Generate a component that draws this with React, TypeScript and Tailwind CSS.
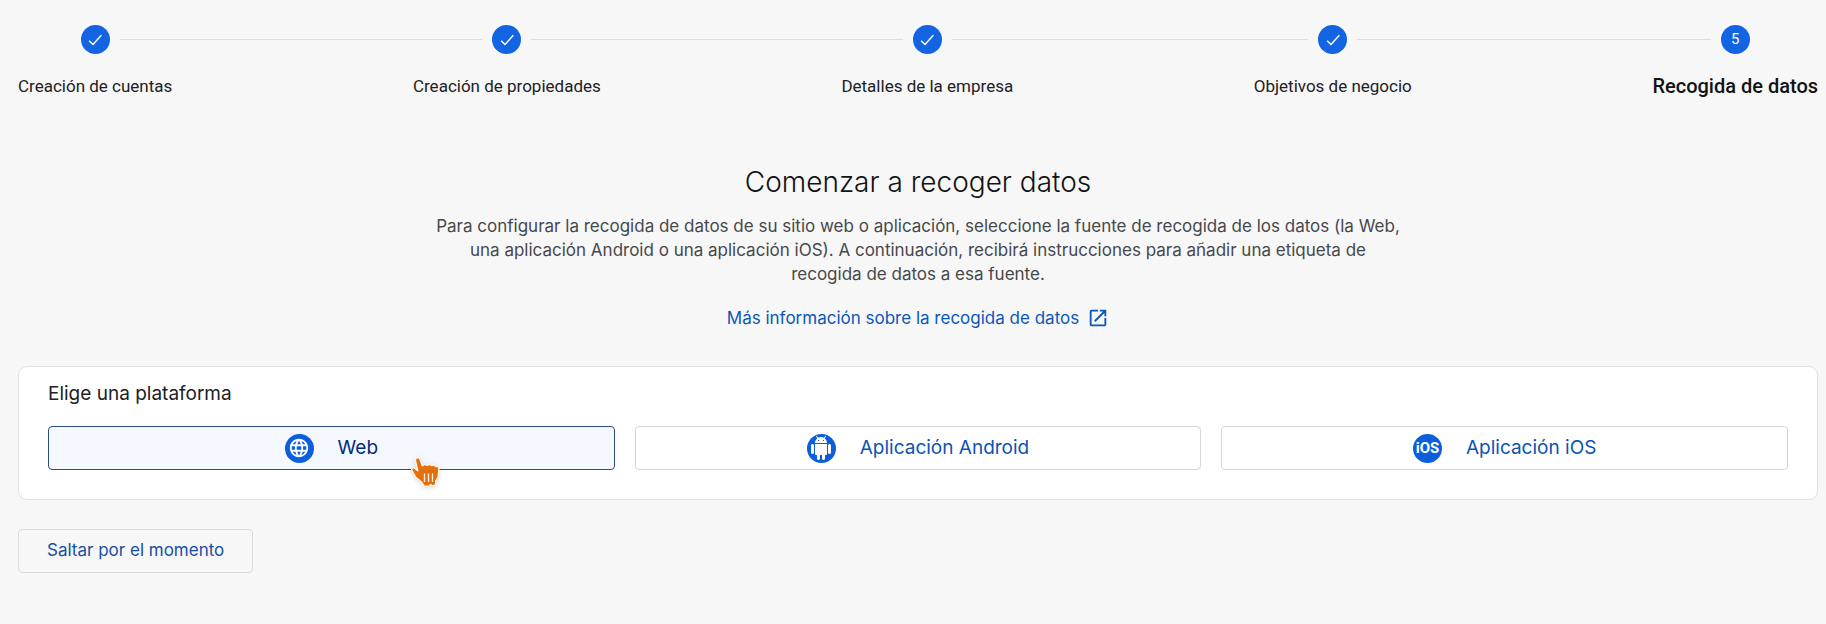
import { Fragment, useState } from 'react';
import { MdLanguage, MdOpenInNew } from 'react-icons/md';
import clsx from 'clsx';

const STEPS = [
  { label: 'Creación de cuentas', done: true },
  { label: 'Creación de propiedades', done: true },
  { label: 'Detalles de la empresa', done: true },
  { label: 'Objetivos de negocio', done: true },
  { label: 'Recogida de datos', done: false },
];

type PlatformId = 'web' | 'android' | 'ios';

const PLATFORMS: { id: PlatformId; label: string }[] = [
  { id: 'web', label: 'Web' },
  { id: 'android', label: 'Aplicación Android' },
  { id: 'ios', label: 'Aplicación iOS' },
];

function Line({ hidden }: { hidden?: boolean }) {
  return <span className={clsx('h-px flex-1', !hidden && 'bg-[#dcdde0]')} />;
}

function CheckMark() {
  return (
    <svg viewBox="0 0 24 24" className="size-5" fill="none" stroke="currentColor" strokeWidth="1.8" aria-hidden="true">
      <path d="M5 12.8l4.6 4.6L19.6 6.4" />
    </svg>
  );
}

function Stepper() {
  return (
    <ol className="flex items-start font-['Roboto',sans-serif]">
      {STEPS.map((step, i) => (
        <Fragment key={step.label}>
          {i > 0 && (
            <li aria-hidden="true" className="flex h-[29px] flex-1 items-center">
              <Line />
            </li>
          )}
          <li className="flex flex-col gap-5" aria-current={step.done ? undefined : 'step'}>
            <div className="flex h-[29px] items-center gap-2.5">
              <Line hidden={i === 0} />
              <span className="flex size-[29px] items-center justify-center rounded-full bg-[#1264e3] text-[15px] text-white">
                {step.done ? <CheckMark /> : i + 1}
              </span>
              <Line hidden={i === STEPS.length - 1} />
            </div>
            <span
              className={clsx(
                'whitespace-nowrap leading-6',
                step.done ? 'text-[17px] text-[#202124]' : 'text-[20px] font-medium text-[#111214]'
              )}
            >
              {step.label}
            </span>
          </li>
        </Fragment>
      ))}
    </ol>
  );
}

function AndroidRobot() {
  return (
    <svg viewBox="0 0 24 24" className="size-6" fill="currentColor">
      <path d="M6 18c0 .55.45 1 1 1h1v3.5c0 .83.67 1.5 1.5 1.5s1.5-.67 1.5-1.5V19h2v3.5c0 .83.67 1.5 1.5 1.5s1.5-.67 1.5-1.5V19h1c.55 0 1-.45 1-1V8H6v10z" />
      <path d="M3.5 8C2.67 8 2 8.67 2 9.5v7c0 .83.67 1.5 1.5 1.5S5 17.33 5 16.5v-7C5 8.67 4.33 8 3.5 8zm17 0c-.83 0-1.5.67-1.5 1.5v7c0 .83.67 1.5 1.5 1.5s1.5-.67 1.5-1.5v-7c0-.83-.67-1.5-1.5-1.5z" />
      <path d="M15.53 2.16l1.3-1.3c.2-.2.2-.51 0-.71-.2-.2-.51-.2-.71 0l-1.48 1.48C13.85 1.23 12.95 1 12 1c-.96 0-1.86.23-2.66.63L7.85.15c-.2-.2-.51-.2-.71 0-.2.2-.2.51 0 .71l1.31 1.31C6.97 3.26 6 5.01 6 7h12c0-1.99-.97-3.75-2.47-4.84zM10 5H9V4h1v1zm5 0h-1V4h1v1z" />
    </svg>
  );
}

function PlatformIcon({ id }: { id: PlatformId }) {
  return (
    <span
      aria-hidden="true"
      className="flex size-[29px] shrink-0 items-center justify-center rounded-full bg-[#0b5fdd] text-white"
    >
      {id === 'web' && <MdLanguage size={22} />}
      {id === 'android' && <AndroidRobot />}
      {id === 'ios' && <span className="font-['Roboto',sans-serif] text-[15px] font-bold">iOS</span>}
    </span>
  );
}

function HandCursor() {
  return (
    <svg
      viewBox="0 0 32 34"
      className="pointer-events-none absolute top-[30px] left-[361px] z-10 h-[34px] w-8 drop-shadow-sm"
      aria-hidden="true"
    >
      <path
        d="M6.4 4.400c-.6-2.600 3.600-3.800 4.600-1.200l2.300 6.600 2.300-1.600 2.700 1.200 1.700-1 2.800 1.200 1.900-.900 2 1.700 1.900-.300 1.400 2.300-.8 8.600-2.200 3.600-.4 4.200-3.200 1.300-1.800-1.500-1.900 2-4.600-.6-2.500-3.600-6.300-5.700-3.500-6.300c-.8-2.200 1.500-3.600 3.200-1.900l2.700 2.200z"
        fill="#e2700f"
        stroke="#fff3e2"
        strokeWidth="1.5"
        strokeLinejoin="round"
      />
      <path d="M15.5 17.500v8.500M19.500 17.500v8.500M23.500 17.500v8.500" stroke="#fff3e2" strokeWidth="1.3" />
    </svg>
  );
}

export default function App() {
  const [platform, setPlatform] = useState<PlatformId>('web');

  return (
    <main className="min-h-screen bg-[#f7f7f7] pt-[25px] pr-2 pb-12 pl-[18px] font-['Inter',sans-serif]">
      <Stepper />

      <section className="mx-auto flex max-w-[968px] flex-col items-center pt-[66px] text-center">
        <h1 className="text-[28px] leading-9 font-light text-[#111214]">Comenzar a recoger datos</h1>
        <p className="mt-3.5 text-[17px] leading-6 text-[#46484c]">
          Para configurar la recogida de datos de su sitio web o aplicación, seleccione la fuente de recogida de los
          datos (la Web, una aplicación Android o una aplicación iOS). A continuación, recibirá instrucciones para
          añadir una etiqueta de recogida de datos a esa fuente.
        </p>
        <a href="#" className="mt-5 flex items-center gap-2 text-[17px] leading-6 text-[#0b57b8]">
          Más información sobre la recogida de datos
          <MdOpenInNew size={22} aria-hidden="true" />
        </a>
      </section>

      <section className="mt-9 rounded-[9px] border border-[#e0e1e3] bg-white px-[29px] pt-[13px] pb-[29px]">
        <h2 className="text-[19px] leading-7 text-[#202124]">Elige una plataforma</h2>
        <div className="relative mt-[18px] grid grid-cols-3 gap-5">
          {PLATFORMS.map((p) => (
            <button
              key={p.id}
              type="button"
              aria-pressed={platform === p.id}
              onClick={() => setPlatform(p.id)}
              className={clsx(
                'flex h-11 items-center justify-center gap-6 rounded border text-[19px]',
                platform === p.id
                  ? 'border-[#2c4a86] bg-[#f5f9ff] text-[#062a7c]'
                  : 'border-[#d5d7dc] bg-white text-[#0b53b5]'
              )}
            >
              <PlatformIcon id={p.id} />
              {p.label}
            </button>
          ))}
          <HandCursor />
        </div>
      </section>

      <button
        type="button"
        className="mt-[29px] h-11 rounded border border-[#d9dbdf] px-7 text-[17px] text-[#174ea6]"
      >
        Saltar por el momento
      </button>
    </main>
  );
}
